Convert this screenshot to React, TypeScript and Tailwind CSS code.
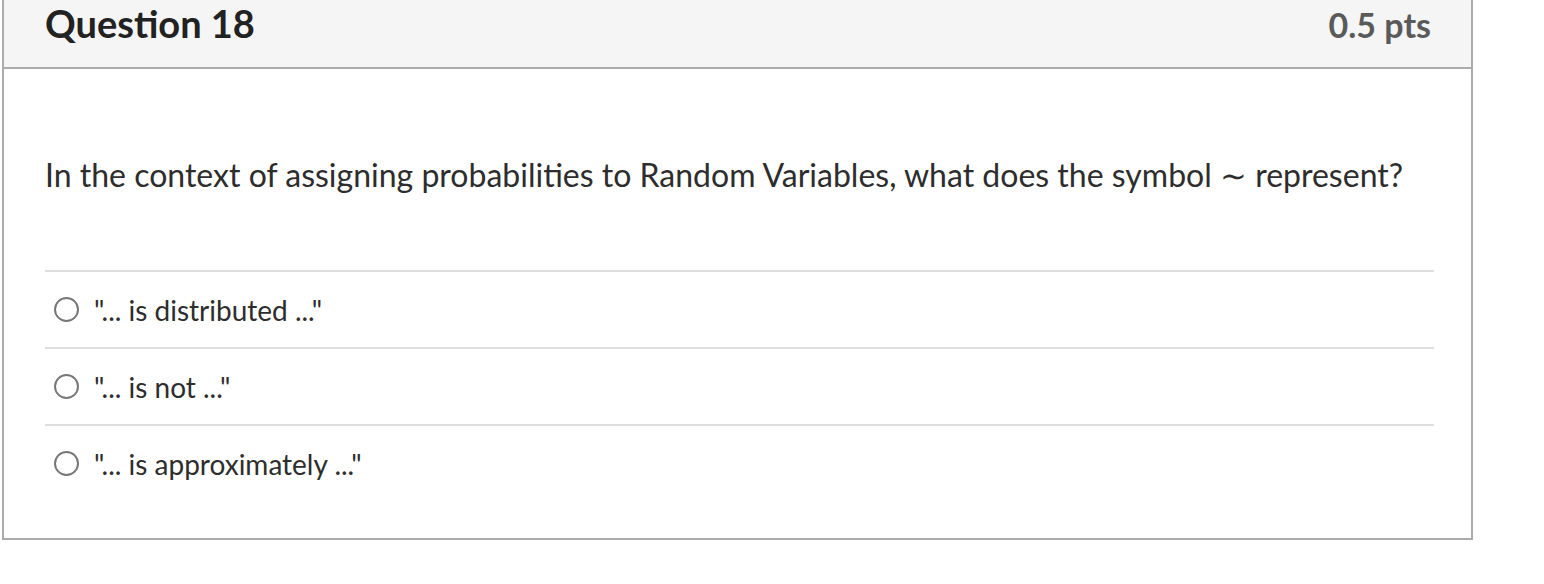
const ANSWERS = ['"... is distributed ..."', '"... is not ..."', '"... is approximately ..."'];

export default function App() {
  return (
    <div className="bg-white min-h-screen pl-[2px]" style={{ fontFamily: 'Lato, "Noto Sans", sans-serif' }}>
      <div className="w-[1471px] border-x-2 border-b-2 border-[#ababab]">
        <div className="h-[69px] bg-[#f5f5f5] border-b-2 border-[#ababab] flex items-start justify-between pl-[41px] pr-[40px] pt-[1px]">
          <h2 className="text-[38px] font-bold text-[#222] leading-[44px]">Question 18</h2>
          <span className="text-[34px] font-bold text-[#5a5a5a] leading-[48px]">0.5 pts</span>
        </div>
        <div className="px-[41px] pt-[86px] pb-[37px]">
          <p className="text-[32px] text-[#2d2d2d] leading-[40px]">
            In the context of assigning probabilities to Random Variables, what does the symbol{' '}
            <span className="font-['Liberation_Serif',serif] text-[32px]">∼</span> represent?
          </p>
          <div className="mt-[74px] w-[1389px]">
            {ANSWERS.map(a => (
              <div key={a} className="h-[77px] border-t-2 border-[#dedede] flex items-center pl-[9px] gap-[15px]">
                <span className="w-[25px] h-[25px] rounded-full border-2 border-[#777] shrink-0" />
                <span className="text-[28px] text-[#2d2d2d]">{a}</span>
              </div>
            ))}
          </div>
        </div>
      </div>
    </div>
  );
}
